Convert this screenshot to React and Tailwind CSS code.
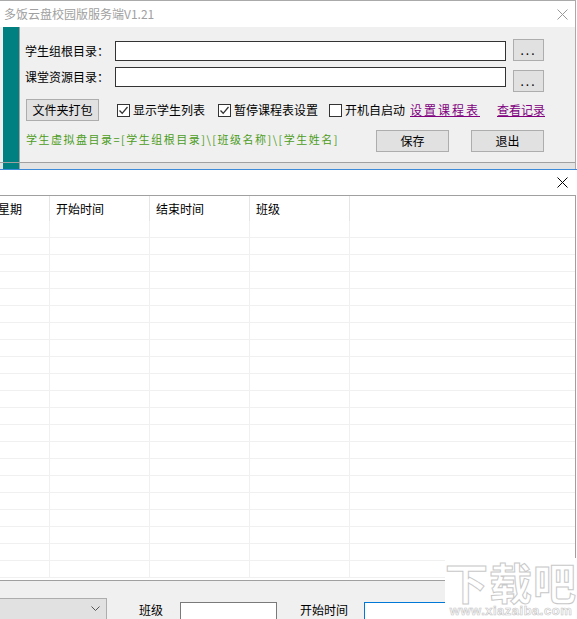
import React from 'react';

const FONT = "font-['Noto_Sans_CJK_SC','Noto_Sans',sans-serif]";

function CloseX({ color }) {
  return (
    <svg width="11" height="11" viewBox="0 0 11 11">
      <path d="M0.5 0.5 L10.5 10.5 M10.5 0.5 L0.5 10.5" stroke={color} strokeWidth="1" fill="none" />
    </svg>
  );
}

function Check({ checked, label, width }) {
  return (
    <div className="flex items-center">
      <span className="w-[13px] h-[13px] border border-[#333] bg-white flex items-center justify-center">
        {checked && (
          <svg width="11" height="11" viewBox="0 0 11 11">
            <path d="M1.5 5.5 L4.2 8.3 L9.5 2" stroke="#333" strokeWidth="1.3" fill="none" />
          </svg>
        )}
      </span>
      <span className="ml-[3px] text-[12px] text-black whitespace-nowrap" style={{ width }}>{label}</span>
    </div>
  );
}

function Btn({ children, w, cls = '' }) {
  return (
    <div className={`h-[22px] ${w} bg-[#e1e1e1] border border-[#adadad] flex items-center justify-center text-[12px] text-black ${cls}`}>
      {children}
    </div>
  );
}

const COLS = [
  { label: '星期', w: 'w-[50px]', pad: 'pl-0' },
  { label: '开始时间', w: 'w-[100px]', pad: 'pl-[6px]' },
  { label: '结束时间', w: 'w-[100px]', pad: 'pl-[6px]' },
  { label: '班级', w: 'w-[100px]', pad: 'pl-[6px]' },
];

export default function App() {
  const rows = Array.from({ length: 21 }, (_, i) => i);
  return (
    <div className={`w-[577px] h-[619px] overflow-hidden bg-white relative ${FONT}`}>
      {/* 上层窗口：服务端设置 */}
      <div className="w-[576px] border-r border-[#aaa]">
        <div className="h-[27px] bg-white border-t border-[#aaa] flex items-center">
          <span className="pl-[4px] text-[12px] text-[#a0a0a0]">多饭云盘校园版服务端V1.21</span>
          <div className="flex-1" />
          <div className="mr-[7px] flex items-center"><CloseX color="#999" /></div>
        </div>
        <div className="h-[135px] bg-[#f0f0f0] flex">
          <div className="ml-[3px] w-[16px] bg-[#008080]" />
          <div className="w-px bg-[#a0a0a0]" />
          <div className="flex-1 pl-[5px] pt-[12px]">
            <div className="flex items-end">
              <span className="w-[90px] h-[20px] leading-[20px] text-[12px] text-black">学生组根目录：</span>
              <div className="w-[391px] h-[20px] bg-white border border-[#333]" />
              <Btn w="w-[31px]" cls="ml-[7px] tracking-[2px]">...</Btn>
            </div>
            <div className="flex items-start mt-[6px]">
              <span className="w-[90px] h-[20px] leading-[20px] text-[12px] text-black">课堂资源目录：</span>
              <div className="w-[391px] h-[20px] bg-white border border-[#333]" />
              <Btn w="w-[31px]" cls="ml-[7px] mt-[3px] tracking-[2px]">...</Btn>
            </div>
            <div className="flex items-center mt-[7px] h-[22px]">
              <Btn w="w-[73px]" cls="ml-[1px]">文件夹打包</Btn>
              <div className="ml-[18px]"><Check checked label="显示学生列表" width={85} /></div>
              <Check checked label="暂停课程表设置" width={95} />
              <Check label="开机自启动" width={65} />
              <span className="w-[87px] text-[12px] text-[#800080] underline tracking-[2px] whitespace-nowrap">设置课程表</span>
              <span className="text-[12px] text-[#800080] underline whitespace-nowrap">查看记录</span>
            </div>
            <div className="flex items-center mt-[9px] h-[22px]">
              <span className="ml-[1px] w-[350px] -mt-[3px] text-[11px] tracking-[1.5px] text-[#4c9c22] whitespace-nowrap">
                学生虚拟盘目录=[学生组根目录]\[班级名称]\[学生姓名]
              </span>
              <Btn w="w-[73px]">保存</Btn>
              <Btn w="w-[73px]" cls="ml-[22px]">退出</Btn>
            </div>
          </div>
        </div>
        <div className="h-[7px] border-t border-[#a0a0a0] bg-[#e3e3e3] flex">
          <div className="ml-[3px] w-[16px] bg-[#008080]" />
          <div className="w-px bg-[#a0a0a0]" />
        </div>
      </div>

      {/* 下层窗口：课程表 */}
      <div className="border-t border-[#3c8ad8]">
        <div className="h-[25px] bg-white flex items-center justify-end">
          <div className="mr-[9px] flex items-center"><CloseX color="#000" /></div>
        </div>
        <div className="w-[576px] h-[386px] border-t border-b border-r border-[#a0a0a0] overflow-hidden">
          <div className="flex h-[25px]">
            {COLS.map((c) => (
              <div key={c.label} className={`${c.w} h-full flex items-center ${c.pad} text-[12px] text-black border-r border-[#e5e5e5] whitespace-nowrap`}>
                <span className={c.label === '星期' ? '-ml-[2px]' : ''}>{c.label}</span>
              </div>
            ))}
            <div className="flex-1" />
          </div>
          {rows.map((r) => (
            <div key={r} className="flex h-[17px] border-b border-[#f0f0f0]">
              {COLS.map((c) => (
                <div key={c.label} className={`${c.w} h-full border-r border-[#f0f0f0]`} />
              ))}
              <div className="flex-1" />
            </div>
          ))}
        </div>
        <div className="h-[38px] bg-[#f0f0f0] flex items-start pt-[17px]">
          <div className="w-[107px] h-[22px] bg-[#e1e1e1] border border-l-0 border-[#adadad] flex items-center justify-end pr-[6px]">
            <svg width="9" height="6" viewBox="0 0 9 6">
              <path d="M0.5 0.5 L4.5 4.5 L8.5 0.5" stroke="#555" strokeWidth="1" fill="none" />
            </svg>
          </div>
          <span className="ml-[32px] w-[41px] h-[22px] leading-[24px] text-[12px] text-black">班级</span>
          <div className="mt-[4px] w-[97px] h-[20px] bg-white border border-[#7a7a7a]" />
          <span className="ml-[23px] w-[64px] h-[22px] leading-[24px] text-[12px] text-black">开始时间</span>
          <div className="mt-[4px] w-[150px] h-[20px] bg-white border border-[#0078d7]" />
        </div>
      </div>

      {/* 水印 */}
      <div className="absolute right-0 bottom-0 w-[132px] h-[61px] bg-white flex flex-col items-center">
        <span className="text-[43px] leading-[46px] font-bold text-white tracking-[1px] [-webkit-text-stroke:1px_#c8c8c8]">下载吧</span>
        <span className="text-[13px] leading-[14px] font-bold text-white tracking-[0.5px] [-webkit-text-stroke:0.6px_#c4c4c4] font-['Liberation_Sans',sans-serif]">www.xiazaiba.com</span>
      </div>
    </div>
  );
}
